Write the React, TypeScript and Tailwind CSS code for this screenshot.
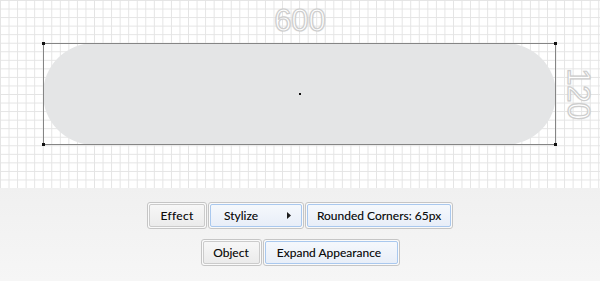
import React from "react";

const font = { fontFamily: 'Lato, "Open Sans", sans-serif' };
const dimFont = { fontFamily: '"Liberation Sans", Arial, sans-serif' };

function Btn({
  w,
  blue,
  children,
  className = "",
}: {
  w: string;
  blue?: boolean;
  children: React.ReactNode;
  className?: string;
}) {
  return (
    <div className={`border border-[#c5c5c5] rounded-[3px] p-px bg-[#fafafa] ${w}`}>
      <div
        className={`h-[23px] rounded-[2px] border flex items-center text-[12px] text-[#0d0d0d] [text-shadow:0_0_0.2px_rgba(0,0,0,0.35)] ${
          blue
            ? "border-[#a9c8ee] bg-[linear-gradient(to_bottom,#f5f8fc,#e8eef8)]"
            : "border-[#cbcbcb] bg-[linear-gradient(to_bottom,#f7f7f7,#ebebeb)]"
        } ${className}`}
      >
        {children}
      </div>
    </div>
  );
}

function Handle({ className }: { className: string }) {
  return <div className={`absolute w-[3px] h-[3px] bg-[#111] ${className}`} />;
}

export default function App() {
  return (
    <div className="w-[600px] h-[281px] overflow-hidden flex flex-col" style={font}>
      <div className="relative h-[188px] bg-white bg-[linear-gradient(to_right,#e4e4e4_1px,transparent_1px),linear-gradient(to_bottom,#e4e4e4_1px,transparent_1px)] bg-[size:8.55px_8.55px]">
        {/* selected rounded rectangle */}
        <div className="absolute left-[43px] top-[43px] w-[513px] h-[102px]">
          <div className="w-full h-full rounded-full bg-[#e4e5e6]" />
          <div className="absolute inset-0 border border-[#858585]" />
          <Handle className="-left-px -top-px" />
          <Handle className="-right-px -top-px" />
          <Handle className="-left-px -bottom-px" />
          <Handle className="-right-px -bottom-px" />
          <div className="absolute left-[256px] top-[50px] w-[2px] h-[2px] bg-[#111]" />
        </div>
        {/* dimension labels */}
        <div
          className="absolute left-[250px] top-[3px] w-[100px] text-center text-[31px] leading-[36px] text-white [-webkit-text-stroke:1.2px_#cdcdcd] [text-shadow:0_0_2px_rgba(0,0,0,0.12)]"
          style={dimFont}
        >
          600
        </div>
        <div
          className="absolute left-[528px] top-[76px] w-[100px] text-center text-[31px] leading-[36px] text-white [-webkit-text-stroke:1.2px_#cdcdcd] [text-shadow:0_0_2px_rgba(0,0,0,0.12)] rotate-90"
          style={dimFont}
        >
          120
        </div>
      </div>
      <div className="flex-1 bg-[linear-gradient(to_bottom,#f0f0f0,#f6f6f6)] flex flex-col items-center pt-[14px] gap-[10px]">
        <div className="flex gap-px">
          <Btn w="w-[60px]" className="justify-center tracking-[0.3px]">Effect</Btn>
          <Btn w="w-[96px]" blue className="pl-[13px] pr-[10px] justify-between">
            <span>Stylize</span>
            <svg width="4" height="7" viewBox="0 0 4 7">
              <path d="M0 0 L4 3.5 L0 7 Z" fill="#1c1c1c" />
            </svg>
          </Btn>
          <Btn w="w-[148px]" blue className="justify-center">Rounded Corners: 65px</Btn>
        </div>
        <div className="flex gap-px">
          <Btn w="w-[61px]" className="justify-center">Object</Btn>
          <Btn w="w-[137px]" blue className="justify-center pr-[4px]">Expand Appearance</Btn>
        </div>
      </div>
    </div>
  );
}
